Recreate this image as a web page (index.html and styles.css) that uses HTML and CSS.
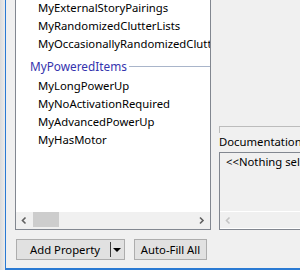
FILE: index.html
```html
<!DOCTYPE html>
<html lang="en">
  <head>
    <meta charset="UTF-8">
    <title>Properties</title>
    <link rel="stylesheet" href="styles.css">
  </head>
  <body>
    <div id="frame">
      <div id="edge"></div>
      <div id="panel">
        <div id="main">
          <div id="prop-list">
            <div id="list-body">
              <div class="item">MyExternalStoryPairings</div>
              <div class="item">MyRandomizedClutterLists</div>
              <div class="item">MyOccasionallyRandomizedClutterLists</div>
              <div class="group-head">
                <span class="group-name">MyPoweredItems</span>
                <span class="group-line"></span>
              </div>
              <div class="item">MyLongPowerUp</div>
              <div class="item">MyNoActivationRequired</div>
              <div class="item">MyAdvancedPowerUp</div>
              <div class="item">MyHasMotor</div>
            </div>
            <div class="hscroll">
              <span class="arrow">
                <svg width="17" height="17" viewBox="0 0 17 17"><polyline points="9.5,5.5 6.5,8.5 9.5,11.5" fill="none" stroke="#606060" stroke-width="1.6"/></svg>
              </span>
              <span class="thumb"></span>
              <span class="track"></span>
              <span class="arrow">
                <svg width="17" height="17" viewBox="0 0 17 17"><polyline points="7,5.5 10,8.5 7,11.5" fill="none" stroke="#606060" stroke-width="1.6"/></svg>
              </span>
            </div>
          </div>

          <div id="side">
            <div class="group-stub"></div>
            <div class="doc-label">Documentation String</div>
            <div class="doc-box">
              <div class="doc-text">&lt;&lt;Nothing selected&gt;&gt;</div>
              <div class="hscroll off">
                <span class="arrow">
                  <svg width="17" height="17" viewBox="0 0 17 17"><polyline points="9.5,5.5 6.5,8.5 9.5,11.5" fill="none" stroke="#c4c4c4" stroke-width="1.6"/></svg>
                </span>
              </div>
            </div>
          </div>
        </div>

        <div id="buttons">
          <div class="btn split">
            <span class="btn-label">Add Property</span>
            <span class="btn-sep"></span>
            <span class="btn-drop"></span>
          </div>
          <div class="btn fill">Auto-Fill All</div>
        </div>
      </div>
    </div>
  </body>
</html>
```

FILE: styles.css
```css
* {
  box-sizing: border-box;
  margin: 0;
  padding: 0;
}

html, body {
  width: 300px;
  height: 270px;
  overflow: hidden;
  background-color: #f0f0f0;
  font-family: "Noto Sans", "Open Sans", sans-serif;
  font-size: 11.3px;
  color: #000;
}

#frame {
  display: flex;
  height: 270px;
}

#edge {
  width: 5px;
  flex-shrink: 0;
  background: linear-gradient(to right, #dadada, #ececec);
}

#panel {
  width: 320px;
  flex-shrink: 0;
  border-left: 1px solid #2a7ad3;
  border-bottom: 2px solid #2a7ad3;
  padding-left: 9px;
  display: flex;
  flex-direction: column;
}

#main {
  display: flex;
  height: 230px;
}

#prop-list {
  width: 196px;
  height: 231px;
  flex-shrink: 0;
  margin-top: -1px;
  border: 1px solid #828790;
  border-top: none;
  background-color: #fff;
  display: flex;
  flex-direction: column;
  overflow: hidden;
}

#list-body {
  flex: 1;
  white-space: nowrap;
  overflow: hidden;
}

.item {
  height: 18px;
  line-height: 18px;
  padding-left: 22px;
}

.group-head {
  display: flex;
  align-items: center;
  height: 20px;
  margin: 3px 0 1px;
  padding-left: 14px;
}

.group-name {
  font-size: 11.8px;
  color: #3434ae;
}

.group-line {
  flex: 1;
  height: 1px;
  margin-left: 2px;
  background-color: #a9b5ca;
}

.hscroll {
  display: flex;
  height: 17px;
  background-color: #f0f0f0;
}

.arrow {
  width: 17px;
  height: 17px;
  display: flex;
}

.thumb {
  width: 26px;
  height: 15px;
  background-color: #cdcdcd;
}

.track {
  flex: 1;
}

#side {
  width: 110px;
  flex-shrink: 0;
  margin-left: 8px;
  padding-top: 126px;
  display: flex;
  flex-direction: column;
}

.group-stub {
  height: 7px;
  border-top: 1px solid #bcbcbc;
  border-left: 1px solid #bcbcbc;
}

.doc-label {
  height: 19px;
  line-height: 17px;
  white-space: nowrap;
}

.doc-box {
  flex: 1;
  border: 1px solid #828790;
  display: flex;
  flex-direction: column;
}

.doc-text {
  flex: 1;
  line-height: 18px;
  padding-left: 6px;
  white-space: nowrap;
}

.hscroll.off {
  height: 18px;
  border-top: 1px solid #fff;
  border-bottom: 1px solid #fff;
}

#buttons {
  display: flex;
  gap: 9px;
  margin-top: 9px;
  padding-left: 1px;
}

.btn {
  height: 21px;
  flex-shrink: 0;
  background-color: #e1e1e1;
  border: 1px solid #adadad;
  display: flex;
  align-items: center;
  white-space: nowrap;
}

.split {
  width: 109px;
  padding-left: 13px;
}

.btn-label {
  width: 80px;
}

.btn-sep {
  width: 1px;
  height: 15px;
  background-color: #3c3c3c;
}

.btn-drop {
  margin-left: 2px;
  width: 0;
  height: 0;
  border-left: 4px solid transparent;
  border-right: 4px solid transparent;
  border-top: 4px solid #000;
}

.fill {
  width: 73px;
  justify-content: center;
}
```
